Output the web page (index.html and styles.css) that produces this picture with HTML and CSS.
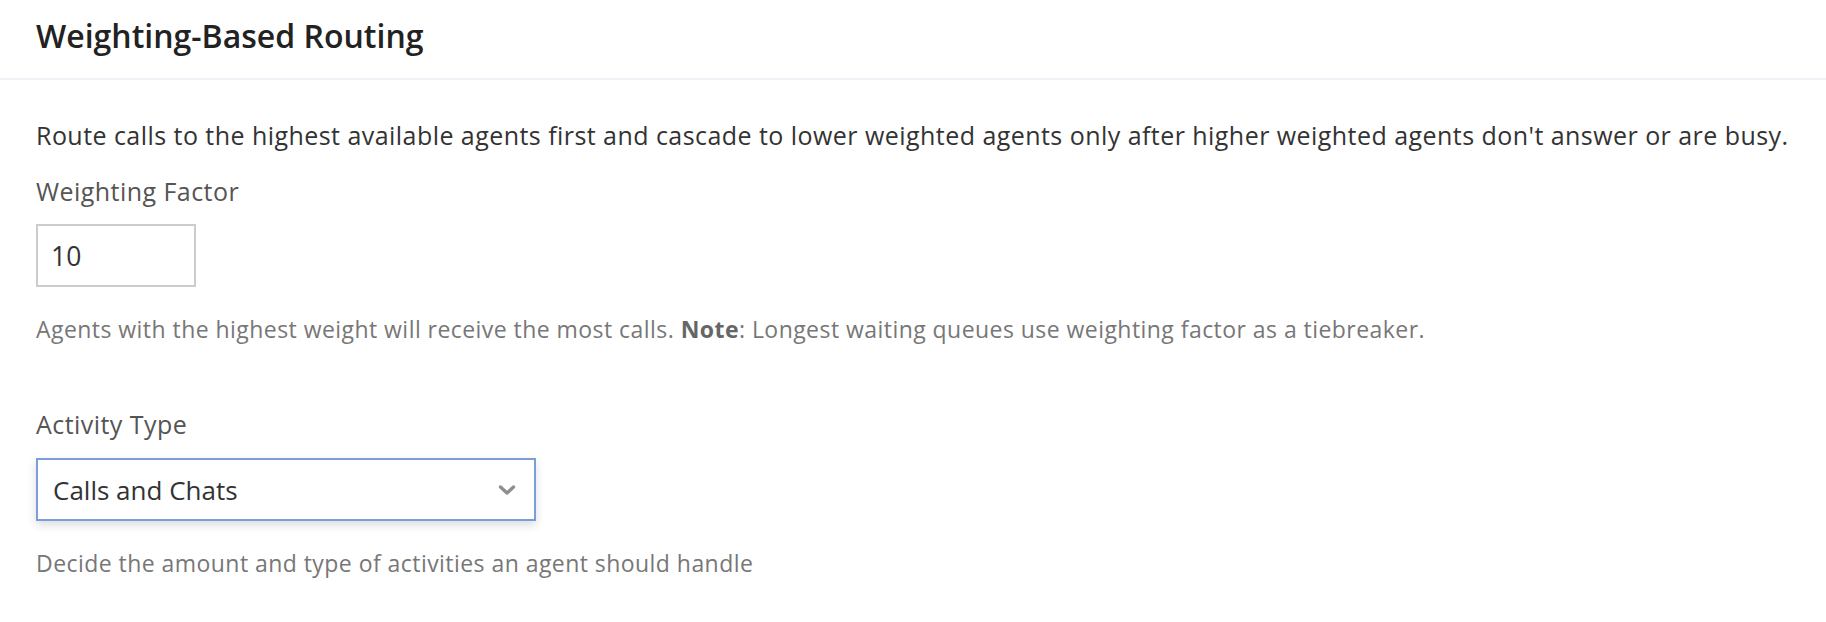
FILE: index.html
```html
<!DOCTYPE html>
<html lang="en">
<head>
<meta charset="utf-8">
<title>Weighting-Based Routing</title>
<link rel="stylesheet" href="styles.css">
</head>
<body>
<div class="panel">
  <header class="panel-header">
    <h2 class="panel-title">Weighting-Based Routing</h2>
  </header>
  <section class="panel-body">
    <p class="intro">Route calls to the highest available agents first and cascade to lower weighted agents only after higher weighted agents don't answer or are busy.</p>

    <div class="field field-weight">
      <label class="field-label">Weighting Factor</label>
      <div class="text-input">10</div>
      <p class="help">Agents with the highest weight will receive the most calls. <strong>Note</strong>: Longest waiting queues use weighting factor as a tiebreaker.</p>
    </div>

    <div class="field field-activity">
      <label class="field-label">Activity Type</label>
      <div class="select-input">
        <span class="select-value">Calls and Chats</span>
        <svg class="chevron" width="18" height="12" viewBox="0 0 18 12" aria-hidden="true">
          <polyline points="2.5,3 9,9 15.5,3" fill="none" stroke="#8f8f8f" stroke-width="3.4" stroke-linecap="round" stroke-linejoin="round"/>
        </svg>
      </div>
      <p class="help">Decide the amount and type of activities an agent should handle</p>
    </div>
  </section>
</div>
</body>
</html>
```

FILE: styles.css
```css
* {
  box-sizing: border-box;
}

html, body {
  margin: 0;
  padding: 0;
  background: #ffffff;
}

body {
  font-family: "Open Sans", "Liberation Sans", Arial, sans-serif;
  color: #333333;
}

.panel {
  width: 100%;
}

.panel-header {
  padding: 15px 36px 21px;
  border-bottom: 2px solid #eff1f7;
}

.panel-title {
  margin: 0;
  font-size: 32px;
  line-height: 42px;
  font-weight: 600;
  color: #222222;
}

.panel-body {
  padding: 37px 36px 0;
  display: flex;
  flex-direction: column;
}

.intro {
  margin: 0;
  font-size: 25px;
  line-height: 36px;
  letter-spacing: 0.45px;
  color: #333333;
  white-space: nowrap;
}

.field {
  display: flex;
  flex-direction: column;
  align-items: flex-start;
}

.field-weight {
  margin-top: 20px;
}

.field-activity {
  margin-top: 62px;
}

.field-label {
  font-size: 25px;
  line-height: 36px;
  letter-spacing: 0.45px;
  color: #555555;
}

.text-input {
  margin-top: 15px;
  width: 160px;
  height: 63px;
  border: 2px solid #cccccc;
  padding: 0 13px;
  display: flex;
  align-items: center;
  font-size: 26.5px;
  color: #333333;
}

.select-input {
  margin-top: 16px;
  width: 500px;
  height: 63px;
  border: 2px solid #7b9ddc;
  padding: 0 18px 0 15px;
  display: flex;
  align-items: center;
  justify-content: space-between;
  box-shadow: 0 4px 9px rgba(0, 0, 0, 0.14);
  font-size: 26px;
  color: #333333;
  background: #ffffff;
}

.chevron {
  display: block;
  margin-top: 1px;
}

.help {
  margin: 27px 0 0;
  font-size: 23px;
  line-height: 30px;
  letter-spacing: 0.45px;
  color: #777777;
}

.help strong {
  font-weight: 700;
  color: #666666;
}
```
